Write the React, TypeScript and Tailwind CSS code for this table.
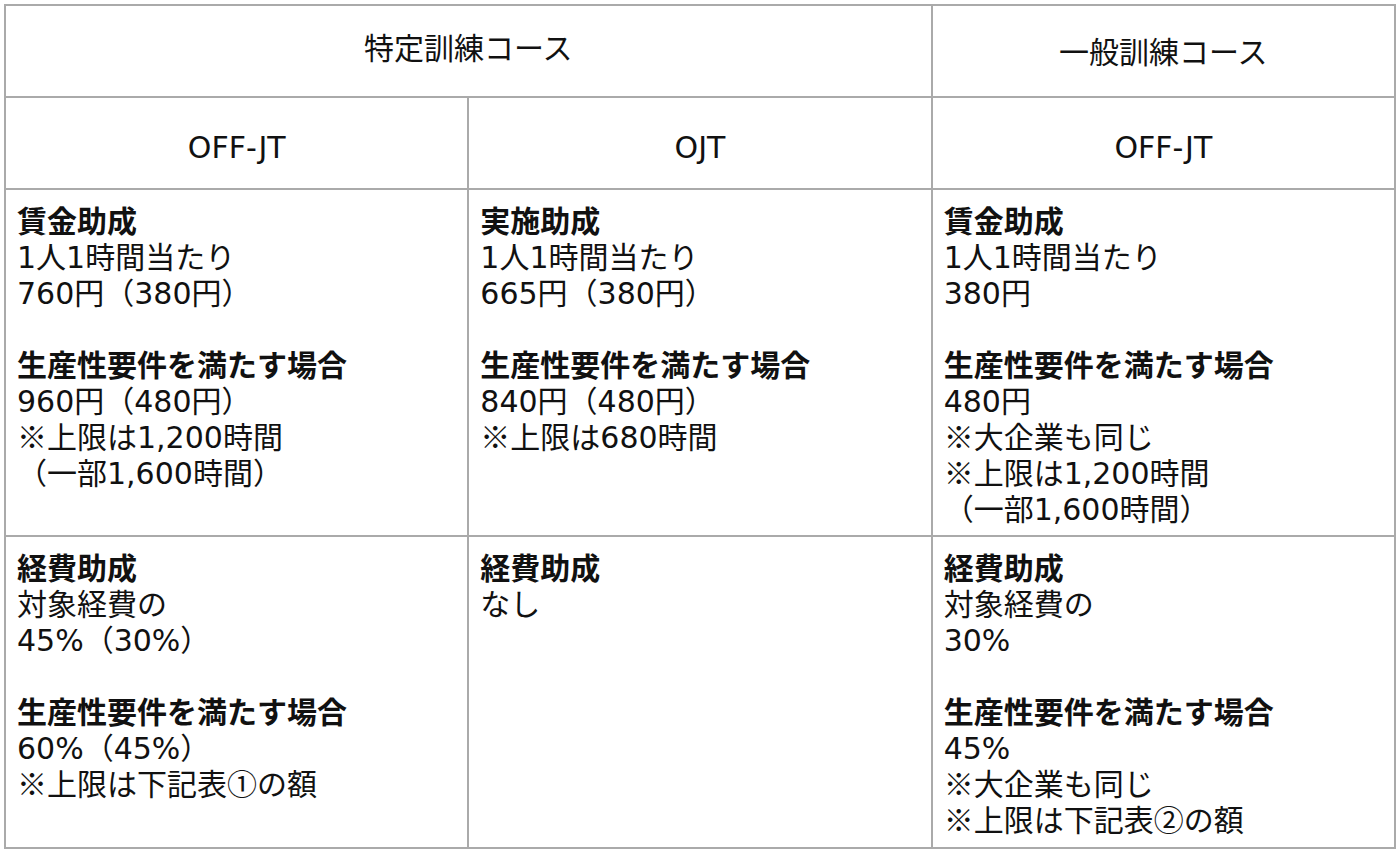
const font = { fontFamily: '"DejaVu Sans", "Noto Sans CJK JP", sans-serif' }

// ※ and circled digits should come from the CJK font (full width)
const Txt = ({ t }: { t: string }) => (
    <>
        {t.split(/([※①②])/).map((p, i) =>
            /[※①②]/.test(p) ? (
                <span key={i} className="font-['Noto_Sans_CJK_JP'] leading-none">
                    {p}
                </span>
            ) : (
                <span key={i}>{p}</span>
            )
        )}
    </>
)

const Cell = ({ lines }: { lines: { t: string; b?: boolean }[] }) => (
    <div className="bg-white pt-[14px] pl-[11px] pr-2 text-[30px] leading-[36px] text-[#111]">
        {lines.map((l, i) =>
            l.t === '' ? (
                <div key={i} className="h-[36px]" />
            ) : (
                <div key={i} className={`h-[36px] whitespace-nowrap ${l.b ? 'font-bold' : 'font-normal'}`}>
                    <Txt t={l.t} />
                </div>
            )
        )}
    </div>
)

const Head = ({ children, span, extra }: { children: string; span?: boolean; extra?: string }) => (
    <div
        className={`bg-white flex items-center justify-center text-[30px] text-[#111] ${span ? 'col-span-2' : ''} ${extra ?? ''}`}
    >
        {children}
    </div>
)

export default function App() {
    return (
        <div className="min-h-screen bg-white pt-[4px] pl-[4px]" style={font}>
            <div className="grid w-[1392px] grid-cols-3 grid-rows-[90px_90px_345px_310px] gap-[2px] bg-[#aaaaaa] p-[2px]">
                <Head span extra="pb-[6px]">特定訓練コース</Head>
                <Head extra="pt-[2px]">一般訓練コース</Head>

                <Head extra="pt-[8px]">OFF-JT</Head>
                <Head extra="pt-[8px]">OJT</Head>
                <Head extra="pt-[8px]">OFF-JT</Head>

                <Cell
                    lines={[
                        { t: '賃金助成', b: true },
                        { t: '1人1時間当たり' },
                        { t: '760円（380円）' },
                        { t: '' },
                        { t: '生産性要件を満たす場合', b: true },
                        { t: '960円（480円）' },
                        { t: '※上限は1,200時間' },
                        { t: '（一部1,600時間）' },
                    ]}
                />
                <Cell
                    lines={[
                        { t: '実施助成', b: true },
                        { t: '1人1時間当たり' },
                        { t: '665円（380円）' },
                        { t: '' },
                        { t: '生産性要件を満たす場合', b: true },
                        { t: '840円（480円）' },
                        { t: '※上限は680時間' },
                    ]}
                />
                <Cell
                    lines={[
                        { t: '賃金助成', b: true },
                        { t: '1人1時間当たり' },
                        { t: '380円' },
                        { t: '' },
                        { t: '生産性要件を満たす場合', b: true },
                        { t: '480円' },
                        { t: '※大企業も同じ' },
                        { t: '※上限は1,200時間' },
                        { t: '（一部1,600時間）' },
                    ]}
                />

                <Cell
                    lines={[
                        { t: '経費助成', b: true },
                        { t: '対象経費の' },
                        { t: '45%（30%）' },
                        { t: '' },
                        { t: '生産性要件を満たす場合', b: true },
                        { t: '60%（45%）' },
                        { t: '※上限は下記表①の額' },
                    ]}
                />
                <Cell
                    lines={[
                        { t: '経費助成', b: true },
                        { t: 'なし' },
                    ]}
                />
                <Cell
                    lines={[
                        { t: '経費助成', b: true },
                        { t: '対象経費の' },
                        { t: '30%' },
                        { t: '' },
                        { t: '生産性要件を満たす場合', b: true },
                        { t: '45%' },
                        { t: '※大企業も同じ' },
                        { t: '※上限は下記表②の額' },
                    ]}
                />
            </div>
        </div>
    )
}
